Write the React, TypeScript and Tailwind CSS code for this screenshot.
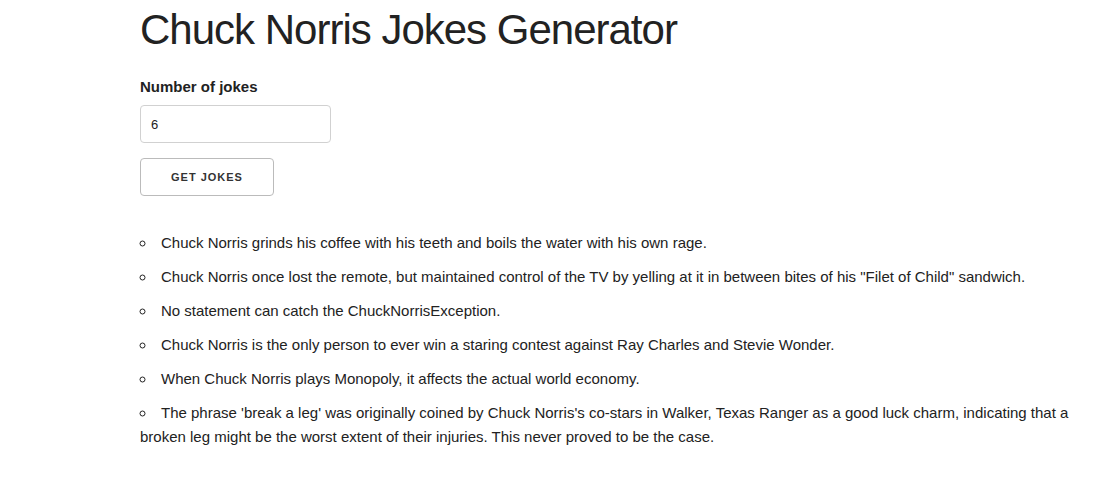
export default function App() {
  const jokes = [
    "Chuck Norris grinds his coffee with his teeth and boils the water with his own rage.",
    "Chuck Norris once lost the remote, but maintained control of the TV by yelling at it in between bites of his \"Filet of Child\" sandwich.",
    "No statement can catch the ChuckNorrisException.",
    "Chuck Norris is the only person to ever win a staring contest against Ray Charles and Stevie Wonder.",
    "When Chuck Norris plays Monopoly, it affects the actual world economy.",
    "The phrase 'break a leg' was originally coined by Chuck Norris's co-stars in Walker, Texas Ranger as a good luck charm, indicating that a broken leg might be the worst extent of their injuries. This never proved to be the case.",
  ];
  return (
    <div className="min-h-[487px] bg-white text-[#222] font-['Liberation_Sans',Arial,sans-serif] text-[15px] leading-[24px]">
      <div className="ml-[140px] w-[950px]">
        <h1 className="text-[42px] leading-[60px] tracking-[-1px] font-light m-0 mb-[15px]">
          Chuck Norris Jokes Generator
        </h1>
        <label className="block font-bold mb-[6px]">Number of jokes</label>
        <input
          type="text"
          defaultValue="6"
          className="block w-[191px] h-[38px] px-[10px] py-[6px] border border-[#d1d1d1] rounded-[4px] text-[13px] mb-[15px] outline-none"
        />
        <button className="block h-[38px] px-[30px] border border-[#bbb] rounded-[4px] text-[11px] font-bold tracking-[1px] uppercase text-[#333] bg-transparent">
          Get Jokes
        </button>
        <ul className="list-inside list-[circle] mt-[35px] p-0">
          {jokes.map((j, i) => (
            <li key={i} className="mb-[10px]">
              {j}
            </li>
          ))}
        </ul>
      </div>
    </div>
  );
}
